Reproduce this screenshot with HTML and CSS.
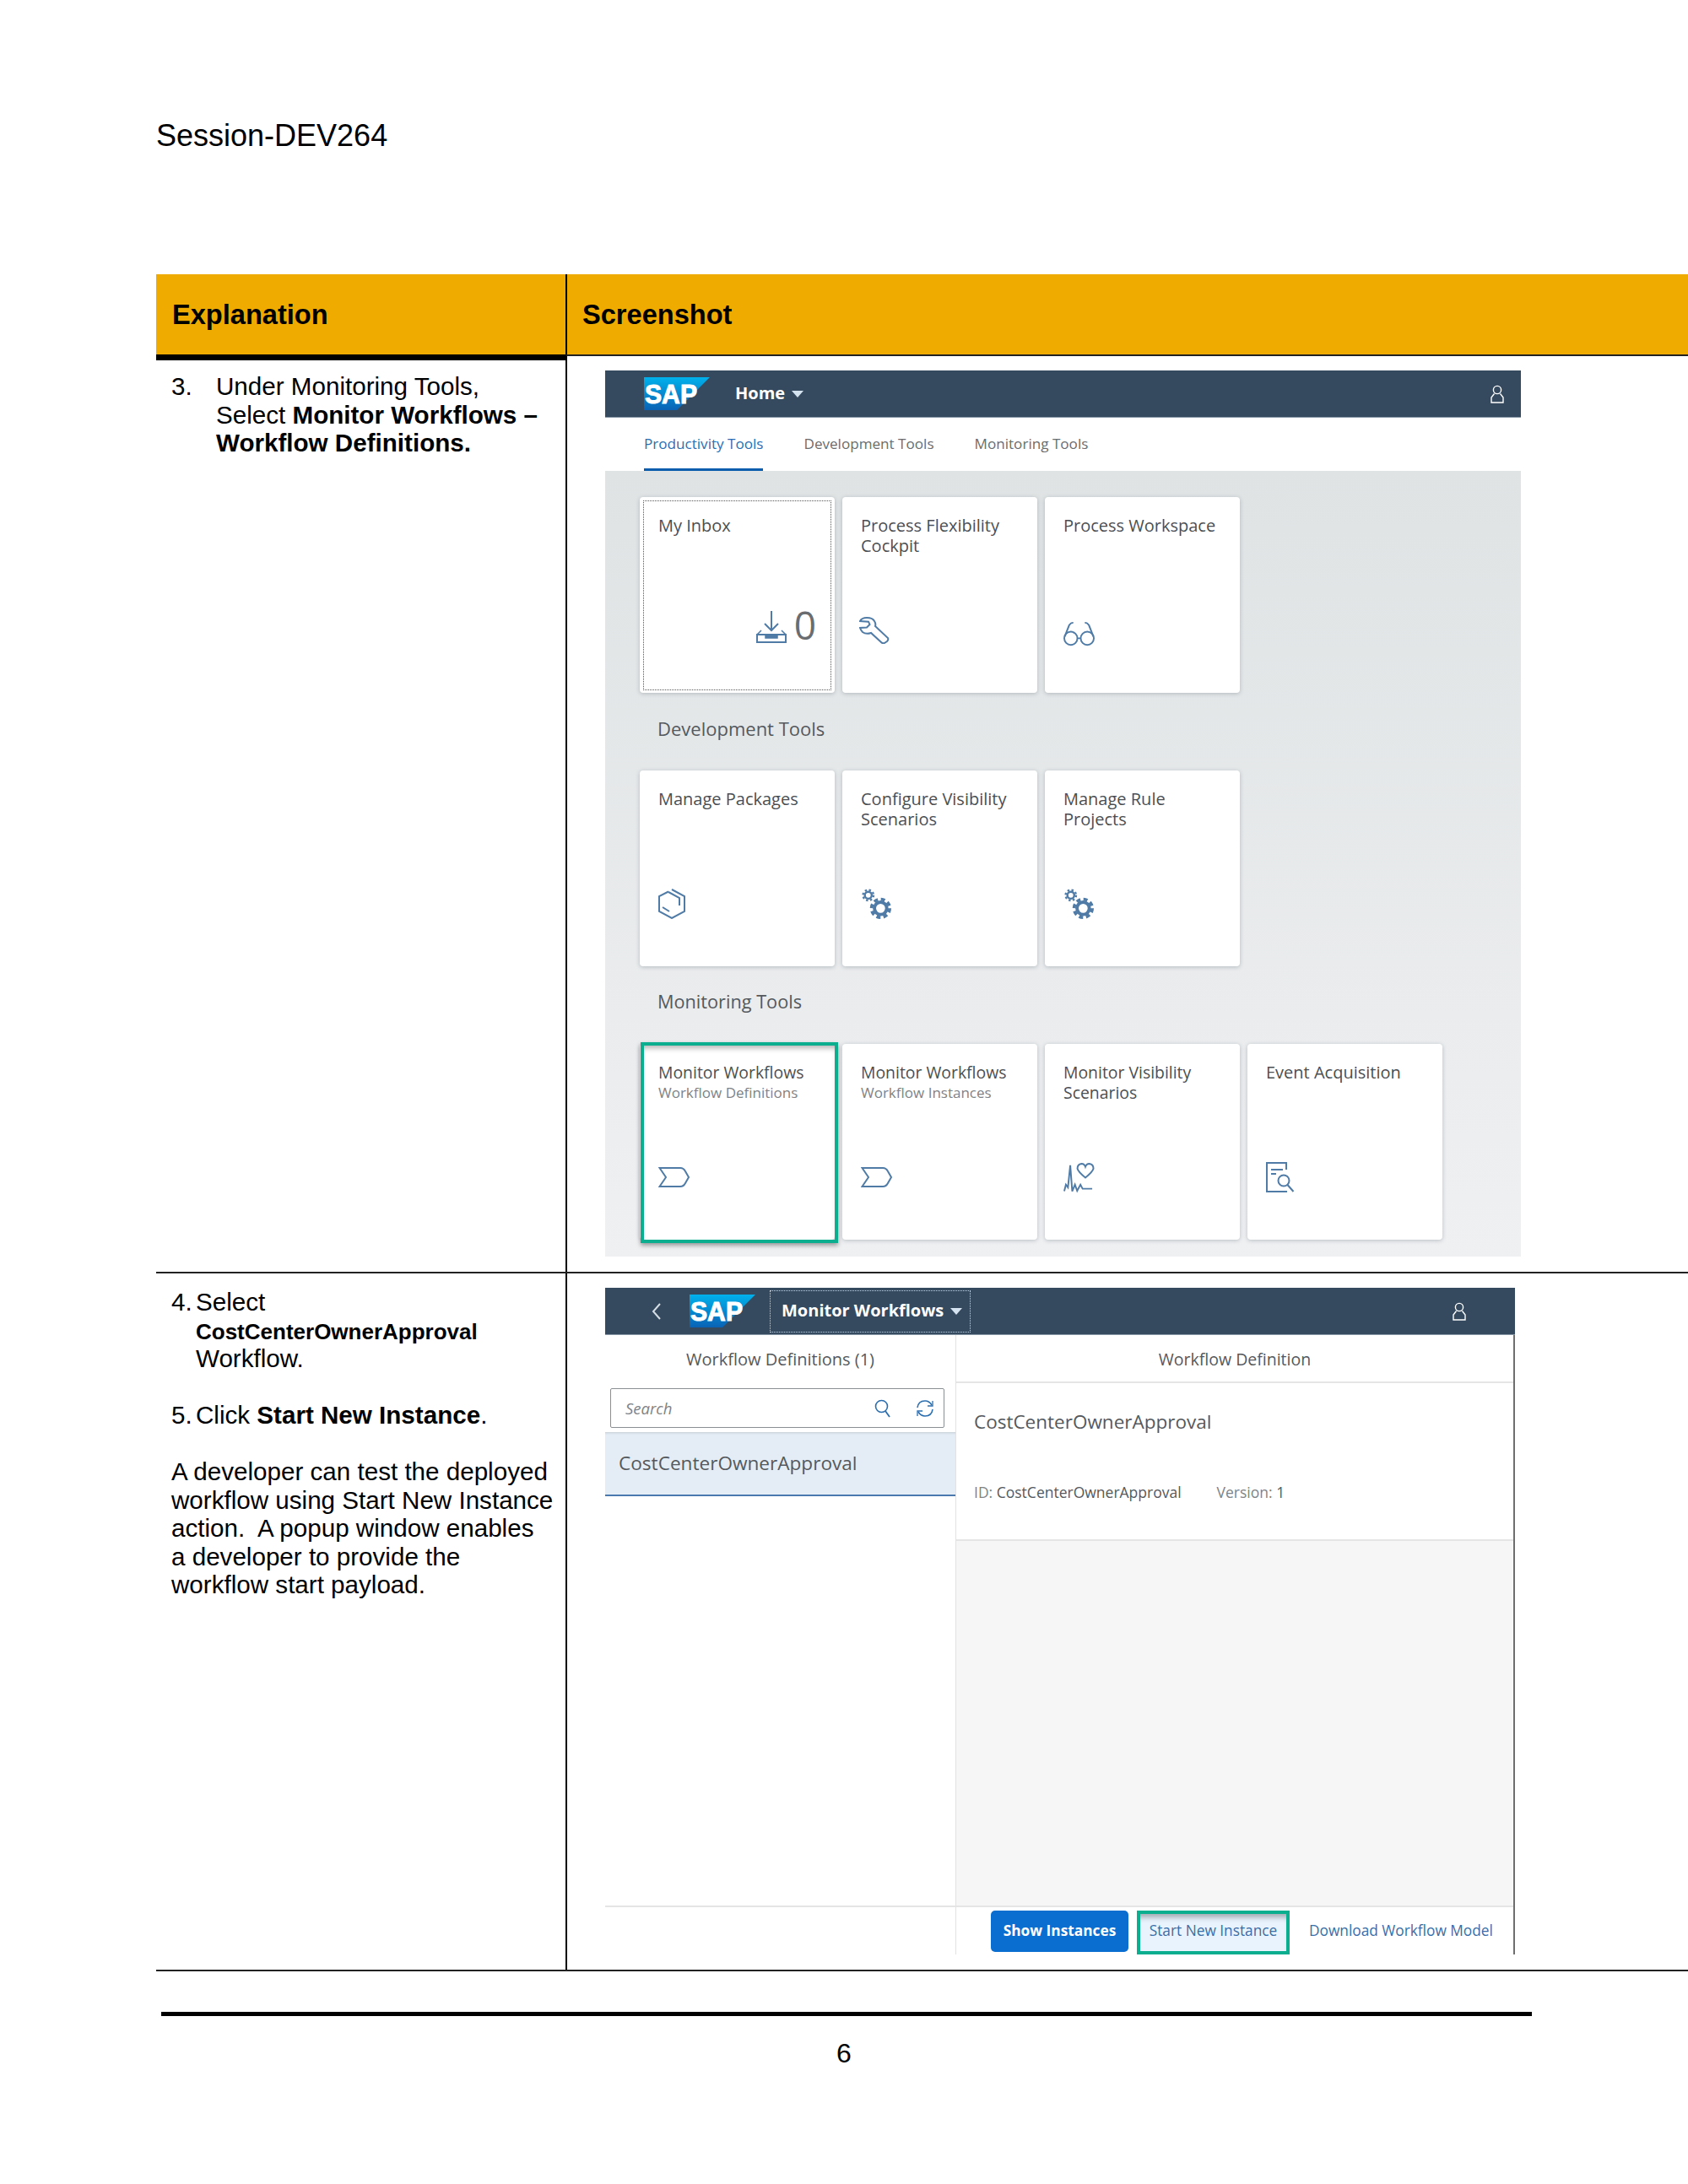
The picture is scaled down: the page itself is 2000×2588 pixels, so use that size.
FILE: index.html
```html
<!DOCTYPE html>
<html lang="en">
<head>
<meta charset="utf-8">
<title>Session-DEV264</title>
<link rel="stylesheet" href="styles.css">
</head>
<body>
<svg class="sprites" width="0" height="0">
	<defs>
		<linearGradient id="sapBlue" x1="0" y1="0" x2="0" y2="1">
			<stop offset="0" stop-color="#00b1eb"/>
			<stop offset="1" stop-color="#0a62b5"/>
		</linearGradient>
		<symbol id="icoUser" viewBox="0 0 18 22">
			<circle cx="9" cy="6" r="4.6" fill="none" stroke="#fff" stroke-width="1.4"/>
			<path d="M5.5 10.5 2 15v6h14v-6l-3.5-4.5" fill="none" stroke="#fff" stroke-width="1.4"/>
		</symbol>
		<symbol id="icoChevron" viewBox="0 0 38 26">
			<path d="M1.5 2H26q4 0 6 4l4 7-4 7q-2 4-6 4H1.500L9 13Z" fill="none" stroke="#4f7ba6" stroke-width="2"/>
		</symbol>
		<symbol id="icoGears" viewBox="0 0 38 38">
			<circle cx="9" cy="8" r="4.200" fill="none" stroke="#4f7ba6" stroke-width="2.500"/>
			<circle cx="9" cy="8" r="6.400" fill="none" stroke="#4f7ba6" stroke-width="2.400" stroke-dasharray="2.500 2.530"/>
			<circle cx="24" cy="24" r="7.500" fill="none" stroke="#4f7ba6" stroke-width="4"/>
			<circle cx="24" cy="24" r="11" fill="none" stroke="#4f7ba6" stroke-width="4" stroke-dasharray="5 3.640"/>
		</symbol>
	</defs>
</svg>

<div class="page">
	<div class="doc-head">Session-DEV264</div>

	<div class="tbl">
		<div class="tbl-head">
			<div class="head-cell head-left">Explanation</div>
			<div class="head-cell head-right">Screenshot</div>
		</div>

		<div class="tbl-row row-a">
			<div class="cell-left first-left">
				<div class="step">
					<span class="step-num wide">3.</span>
					<span>Under Monitoring Tools,<br>Select <b>Monitor Workflows &ndash;<br>Workflow Definitions.</b></span>
				</div>
			</div>
			<div class="cell-right first-right">
				<div class="shot shot-launchpad">
					<div class="shell-bar">
						<svg class="sap-logo logo-home" viewBox="0 0 78 39"><polygon points="0,0 78,0 39,39 0,39" fill="url(#sapBlue)"/><text x="1" y="31" class="sap-text" textLength="62" lengthAdjust="spacingAndGlyphs">SAP</text></svg>
						<span class="shell-title home">Home</span><span class="caret"></span>
						<svg class="shell-user"><use href="#icoUser"/></svg>
					</div>
					<div class="tabs">
						<span class="tab tab-on">Productivity Tools</span>
						<span class="tab">Development Tools</span>
						<span class="tab">Monitoring Tools</span>
					</div>
					<div class="tile-area">
						<div class="tiles">
							<div class="tile tile-focus">
								<div class="tile-name">My Inbox</div>
								<div class="tile-foot foot-inbox">
									<svg class="ico-inbox" viewBox="0 0 36 38"><path d="M18 0v22M10 15l8 8 8-8" fill="none" stroke="#4f7ba6" stroke-width="2"/><path d="M1 28h34v9H1z" fill="none" stroke="#4f7ba6" stroke-width="2"/><path d="M1 28l5-5M35 28l-5-5M11 28h14v4H11z" fill="#4f7ba6" stroke="#4f7ba6" stroke-width="1.500"/></svg>
									<span class="count">0</span>
								</div>
							</div>
							<div class="tile">
								<div class="tile-name">Process Flexibility<br>Cockpit</div>
								<div class="tile-foot">
									<svg class="ico-wrench" viewBox="0 0 36 32"><path d="M1 5Q3 1 9 1q7 0 9 4 2 3 1 6l15 14q1 2-1 4l-3 2q-2 1-4-1L14 19q-6 2-10-1-2-2-3-5l8-.5L12.500 9 11 5.700Z" fill="none" stroke="#4f7ba6" stroke-width="2"/></svg>
								</div>
							</div>
							<div class="tile">
								<div class="tile-name">Process Workspace</div>
								<div class="tile-foot foot-low">
									<svg class="ico" viewBox="0 0 38 30"><circle cx="9" cy="20" r="8" fill="none" stroke="#4f7ba6" stroke-width="2"/><circle cx="29" cy="20" r="8" fill="none" stroke="#4f7ba6" stroke-width="2"/><path d="M17 20h4M1.500 18 7 4q2-3 5-3M36.500 18 31 4q-2-3-5-3" fill="none" stroke="#4f7ba6" stroke-width="2"/></svg>
								</div>
							</div>
						</div>

						<div class="group-name">Development Tools</div>
						<div class="tiles">
							<div class="tile">
								<div class="tile-name">Manage Packages</div>
								<div class="tile-foot">
									<svg class="ico-pack" viewBox="0 0 32 36"><path d="M16 1 31 9v18l-15 8-15-8V9l11-5.500" fill="none" stroke="#4f7ba6" stroke-width="2"/><path d="M12 4l13 7v9M5 22l8 5" fill="none" stroke="#4f7ba6" stroke-width="2"/></svg>
								</div>
							</div>
							<div class="tile">
								<div class="tile-name">Configure Visibility<br>Scenarios</div>
								<div class="tile-foot"><svg class="ico"><use href="#icoGears"/></svg></div>
							</div>
							<div class="tile">
								<div class="tile-name">Manage Rule<br>Projects</div>
								<div class="tile-foot"><svg class="ico"><use href="#icoGears"/></svg></div>
							</div>
						</div>

						<div class="group-name group-mon">Monitoring Tools</div>
						<div class="tiles">
							<div class="tile tile-marked">
								<div class="tile-name name-mon">Monitor Workflows</div>
								<div class="tile-sub">Workflow Definitions</div>
								<div class="tile-foot"><svg class="ico-chev"><use href="#icoChevron"/></svg></div>
							</div>
							<div class="tile">
								<div class="tile-name name-mon">Monitor Workflows</div>
								<div class="tile-sub">Workflow Instances</div>
								<div class="tile-foot"><svg class="ico-chev"><use href="#icoChevron"/></svg></div>
							</div>
							<div class="tile">
								<div class="tile-name name-mon">Monitor Visibility<br>Scenarios</div>
								<div class="tile-foot">
									<svg class="ico" viewBox="0 0 38 36"><path d="M26.700 18Q18 11 17 7q0-5.500 5-6 3.500 0 4.700 3.700Q28 1 31.500 1q5 .5 5 6-1 4-9.800 11Z" fill="none" stroke="#4f7ba6" stroke-width="2"/><path d="M1 34.500l2-8 2.500 3.500L8.300 3l2.400 31.500 3.300-8 2.700 7.500 4-7.500 2.600 5H35" fill="none" stroke="#4f7ba6" stroke-width="2"/></svg>
								</div>
							</div>
							<div class="tile">
								<div class="tile-name">Event Acquisition</div>
								<div class="tile-foot">
									<svg class="ico-doc" viewBox="0 0 34 36"><path d="M24 9V1H1v34h24" fill="none" stroke="#4f7ba6" stroke-width="2"/><path d="M6 9h14M6 14h6" fill="none" stroke="#4f7ba6" stroke-width="2"/><circle cx="21" cy="22" r="6.500" fill="none" stroke="#4f7ba6" stroke-width="2"/><path d="M25.500 27l7 8" fill="none" stroke="#4f7ba6" stroke-width="2"/></svg>
								</div>
							</div>
						</div>
					</div>
				</div>
			</div>
		</div>

		<div class="tbl-row row-b">
			<div class="cell-left second-left">
				<div class="step">
					<span class="step-num">4.</span>
					<span>Select<br><b class="small-bold">CostCenterOwnerApproval</b><br>Workflow.</span>
				</div>
				<div class="step para">
					<span class="step-num">5.</span>
					<span>Click <b>Start New Instance</b>.</span>
				</div>
				<p class="para">A developer can test the deployed<br>workflow using Start New Instance<br>action.&nbsp; A popup window enables<br>a developer to provide the<br>workflow start payload.</p>
			</div>
			<div class="cell-right second-right">
				<div class="shot shot-monitor">
					<div class="shell-bar">
						<svg class="back" viewBox="0 0 14 22"><path d="M11 2 3 11l8 9" fill="none" stroke="#d5dde5" stroke-width="2"/></svg>
						<svg class="sap-logo logo-mon" viewBox="0 0 78 39"><polygon points="0,0 78,0 39,39 0,39" fill="url(#sapBlue)"/><text x="1" y="31" class="sap-text" textLength="62" lengthAdjust="spacingAndGlyphs">SAP</text></svg>
						<div class="shell-menu"><span class="shell-title">Monitor Workflows</span><span class="caret"></span></div>
						<svg class="shell-user user-mon"><use href="#icoUser"/></svg>
					</div>
					<div class="split">
						<div class="pane-left">
							<div class="pane-title title-list">Workflow Definitions (1)</div>
							<div class="search">
								<span class="search-hint">Search</span>
								<svg class="search-ico" viewBox="0 0 20 22"><circle cx="8.500" cy="8.500" r="7" fill="none" stroke="#2b6eb0" stroke-width="1.600"/><path d="M13 14l5 7" fill="none" stroke="#2b6eb0" stroke-width="1.800"/></svg>
								<svg class="refresh-ico" viewBox="0 0 22 22"><path d="M2 10Q3 2 11 2q5 0 8 5M20 12q-1 8-9 8-5 0-8-5" fill="none" stroke="#2b6eb0" stroke-width="1.600"/><path d="M20 2v6h-6M2 20v-6h6" fill="none" stroke="#2b6eb0" stroke-width="1.300"/></svg>
							</div>
							<div class="list-item">CostCenterOwnerApproval</div>
						</div>
						<div class="pane-right">
							<div class="pane-title title-ruled">Workflow Definition</div>
							<div class="detail">
								<div class="detail-name">CostCenterOwnerApproval</div>
								<div class="detail-meta"><span>ID: <em>CostCenterOwnerApproval</em></span><span>Version: <em>1</em></span></div>
							</div>
							<div class="detail-empty"></div>
						</div>
						<div class="foot-left"></div>
						<div class="foot-right">
							<span class="btn-main">Show Instances</span>
							<span class="btn-marked">Start New Instance</span>
							<span class="btn-link">Download Workflow Model</span>
						</div>
					</div>
				</div>
			</div>
		</div>
	</div>

	<div class="page-rule"></div>
	<div class="page-num">6</div>
</div>
</body>
</html>
```

FILE: styles.css
```css
html, body {
	margin: 0;
	padding: 0;
	background: #fff;
}
.sprites {
	display: block;
	height: 0;
}
.page {
	width: 2000px;
	height: 2588px;
	overflow: hidden;
	font-family: "Liberation Sans", Arial, sans-serif;
	font-size: 29.600px;
	line-height: 33.500px;
	color: #000;
}
.doc-head {
	box-sizing: border-box;
	height: 325px;
	padding: 140px 0 0 185px;
	font-size: 36px;
	line-height: 42px;
}

/* table */
.tbl {
	margin-left: 185px;
}
.tbl-head {
	display: grid;
	grid-template-columns: 485px 1fr;
	height: 95px;
	background: #f0ab00;
}
.head-cell {
	font-weight: bold;
	font-size: 32.600px;
	line-height: 95px;
	padding-left: 19px;
}
.head-right {
	border-left: 2px solid #000;
	padding-left: 18px;
}
.tbl-row {
	display: grid;
	grid-template-columns: 485px 1fr;
	box-sizing: border-box;
	border-bottom: 2px solid #222;
}
.row-a {
	height: 1089px;
}
.row-b {
	height: 827px;
}
.cell-left {
	padding-left: 18px;
}
.cell-right {
	border-left: 2px solid #000;
	padding-left: 45px;
}
.first-left {
	border-top: 7px solid #000;
	padding-top: 14px;
}
.first-right {
	border-top: 2px solid #222;
	padding-top: 17px;
}
.second-left {
	padding-top: 17px;
}
.second-right {
	padding-top: 17px;
}
.step {
	display: flex;
}
.step-num {
	flex: none;
	width: 29px;
}
.step-num.wide {
	width: 53px;
}
.para {
	margin: 33.500px 0 0;
}
.small-bold {
	font-size: 26px;
	line-height: 1;
}

/* screenshots */
.shot {
	font-family: "Open Sans", "Noto Sans", sans-serif;
	color: #32363a;
}
.shot-launchpad {
	width: 1085px;
}
.shot-monitor {
	width: 1078px;
}
.shell-bar {
	display: flex;
	align-items: center;
	box-sizing: border-box;
	height: 56px;
	background: #354a5f;
	border-bottom: 1px solid #8696a5;
}
.sap-logo {
	flex: none;
	width: 78px;
	height: 39px;
}
.sap-text {
	font-family: "Liberation Sans", Arial, sans-serif;
	font-weight: bold;
	font-size: 31px;
	fill: #fff;
	stroke: #fff;
	stroke-width: 1px;
}
.logo-home {
	margin-left: 46px;
}
.logo-mon {
	margin-left: 32px;
}
.shell-title {
	margin-top: -2px;
	font-size: 20px;
	font-weight: 700;
	color: #fff;
	white-space: nowrap;
}
.shell-title.home {
	margin-left: 30px;
}
.caret {
	width: 0;
	height: 0;
	margin-left: 8px;
	border-left: 7px solid transparent;
	border-right: 7px solid transparent;
	border-top: 8px solid #d5e3f0;
}
.shell-user {
	flex: none;
	width: 18px;
	height: 22px;
	margin-left: auto;
	margin-right: 19px;
}
.user-mon {
	margin-right: 57px;
}
.back {
	flex: none;
	width: 14px;
	height: 22px;
	margin-left: 54px;
}
.shell-menu {
	display: flex;
	align-items: center;
	box-sizing: border-box;
	height: 50px;
	width: 238px;
	margin-left: 17px;
	padding-left: 13px;
	border: 1px dotted #c9d2da;
}
.tabs {
	display: flex;
	height: 63px;
	background: #fff;
	padding-left: 46px;
}
.tab {
	box-sizing: border-box;
	height: 63px;
	margin-right: 48px;
	padding-top: 18px;
	font-size: 17.100px;
	line-height: 26px;
	color: #6a6d70;
	white-space: nowrap;
}
.tab-on {
	color: #2a6fb5;
	border-bottom: 3px solid #0a5cac;
}
.tile-area {
	box-sizing: border-box;
	height: 931px;
	padding: 31px 0 0 41px;
	background: linear-gradient(#dfe3e4, #eff0f2);
}
.tiles {
	display: flex;
	gap: 9px;
}
.tile {
	position: relative;
	display: flex;
	flex-direction: column;
	box-sizing: border-box;
	width: 231px;
	height: 232px;
	padding: 22px 0 0 22px;
	background: #fff;
	border-radius: 4px;
	box-shadow: 0 1px 5px rgba(60, 75, 85, 0.3);
}
.tile-name {
	font-size: 20px;
	line-height: 23.500px;
	color: #4b4f53;
	white-space: nowrap;
}
.name-mon {
	font-size: 19.400px;
}
.tile-sub {
	font-size: 17px;
	line-height: 23px;
	color: #808386;
	white-space: nowrap;
}
.tile-foot {
	position: absolute;
	left: 22px;
	top: 138px;
	display: flex;
	align-items: center;
	height: 40px;
}
.foot-low {
	top: 142px;
}
.foot-inbox {
	left: auto;
	right: 22px;
	top: 134px;
}
.ico {
	display: block;
	width: 37px;
	height: 37px;
}
.ico-wrench {
	display: block;
	width: 36px;
	height: 32px;
	margin-left: -2px;
}
.ico-inbox {
	width: 36px;
	height: 38px;
}
.count {
	margin: 0 0 6px 9px;
	font-size: 46px;
	line-height: 34px;
	color: #6a6d70;
}
.ico-pack {
	width: 32px;
	height: 36px;
}
.ico-chev {
	width: 38px;
	height: 26px;
}
.ico-doc {
	width: 34px;
	height: 36px;
}
.group-name {
	box-sizing: border-box;
	height: 92px;
	padding: 28px 0 0 21px;
	font-size: 22px;
	line-height: 28px;
	color: #55595d;
}
.group-mon {
	font-size: 21.700px;
}
.tile-focus::after {
	content: "";
	position: absolute;
	left: 4px;
	right: 4px;
	top: 4px;
	bottom: 3px;
	border: 1px dotted #555;
}
.tile-marked::after {
	content: "";
	position: absolute;
	left: 1px;
	right: -4px;
	top: -2px;
	bottom: -4px;
	border: 4px solid #0bae8f;
	box-shadow: 0 3px 5px rgba(0, 0, 0, 0.35), inset 0 6px 6px -3px rgba(0, 0, 0, 0.3);
}

/* monitor app */
.split {
	display: grid;
	grid-template-columns: 416px 1fr;
	grid-template-rows: 676px 58px;
	box-sizing: border-box;
	border-right: 2px solid #6e6e6e;
}
.pane-left, .foot-left {
	border-right: 1px solid #e2e2e2;
}
.pane-right {
	display: flex;
	flex-direction: column;
}
.pane-title {
	box-sizing: border-box;
	height: 57px;
	text-align: center;
	font-size: 19.500px;
	line-height: 57px;
	color: #55595d;
}
.title-list {
	font-size: 20px;
}
.title-ruled {
	border-bottom: 2px solid #e5e5e5;
}
.search {
	display: flex;
	align-items: center;
	box-sizing: border-box;
	width: 396px;
	height: 47px;
	margin: 6px 0 0 6px;
	padding-left: 17px;
	border: 1px solid #8a8f94;
	border-radius: 2px;
}
.search-hint {
	font-size: 18.500px;
	font-style: italic;
	color: #808386;
}
.search-ico {
	width: 20px;
	height: 22px;
	margin-left: auto;
}
.refresh-ico {
	width: 22px;
	height: 22px;
	margin: 0 11px 0 29px;
}
.list-item {
	box-sizing: border-box;
	height: 76px;
	margin-top: 5px;
	padding-left: 16px;
	background: #e4edf6;
	border-bottom: 2px solid #4a79b0;
	box-shadow: inset 0 3px 3px -2px rgba(0, 0, 0, 0.15);
	font-size: 22.600px;
	line-height: 74px;
	color: #55595d;
}
.detail {
	box-sizing: border-box;
	height: 187px;
	padding: 30px 0 0 21px;
	border-bottom: 2px solid #e5e5e5;
}
.detail-name {
	font-size: 22.500px;
	line-height: 32px;
	color: #55595d;
}
.detail-meta {
	display: flex;
	gap: 42px;
	margin-top: 55px;
	font-size: 17.500px;
	line-height: 24px;
	color: #808386;
}
.detail-meta em {
	font-style: normal;
	color: #55595d;
}
.detail-empty {
	flex: 1;
	background: #f6f6f6;
}
.foot-left {
	border-top: 2px solid #e5e5e5;
}
.foot-right {
	display: flex;
	align-items: flex-start;
	box-sizing: border-box;
	padding: 4px 0 0 41px;
	border-top: 2px solid #e5e5e5;
	overflow: hidden;
}
.btn-main {
	box-sizing: border-box;
	width: 163px;
	height: 49px;
	background: #0a6ed1;
	border-radius: 5px;
	text-align: center;
	font-size: 17.300px;
	font-weight: 700;
	line-height: 47px;
	color: #fff;
	white-space: nowrap;
}
.btn-marked {
	box-sizing: border-box;
	width: 181px;
	height: 52px;
	margin-left: 10px;
	background: #e8f3fd;
	border: 4px solid #0bae8f;
	box-shadow: inset 0 8px 6px -4px rgba(0, 0, 0, 0.3);
	text-align: center;
	font-size: 17.300px;
	line-height: 40px;
	color: #3a6ea8;
	white-space: nowrap;
}
.btn-link {
	margin-left: 23px;
	font-size: 17.300px;
	line-height: 48px;
	color: #3a6ea8;
	white-space: nowrap;
}

/* footer */
.page-rule {
	width: 1624px;
	height: 5px;
	margin: 48px 0 0 191px;
	background: #000;
}
.page-num {
	margin-top: 26px;
	text-align: center;
	font-size: 32px;
	line-height: 36px;
}
```
